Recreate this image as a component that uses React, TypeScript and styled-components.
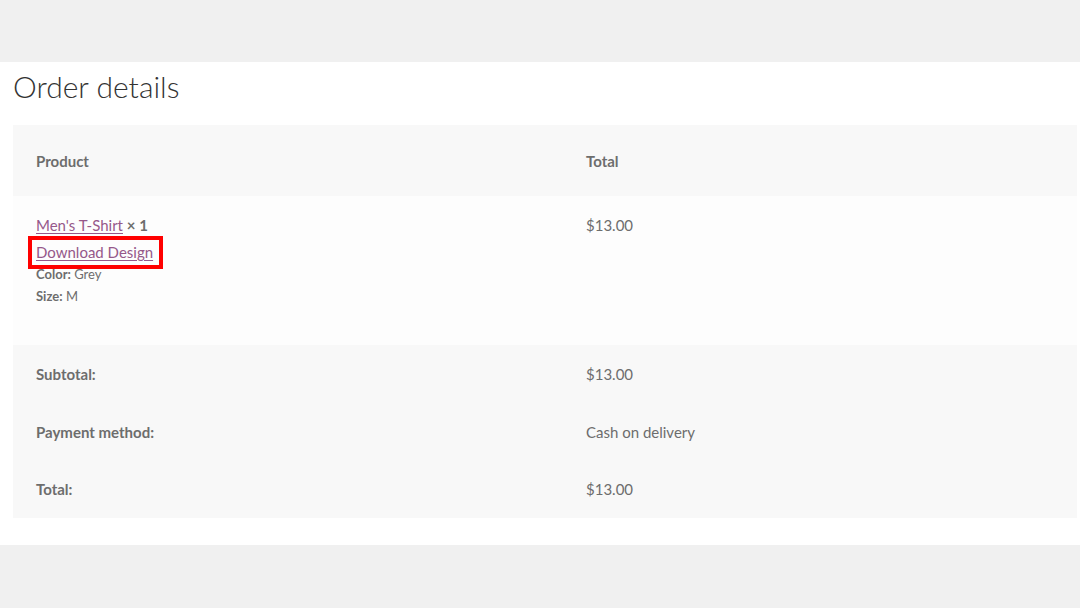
import React from 'react'
import styled, { createGlobalStyle } from 'styled-components'

const GlobalStyle = createGlobalStyle`
  html, body {
    margin: 0;
    padding: 0;
    background: #f0f0f0;
  }
  body {
    font-family: Lato, "Open Sans", sans-serif;
    color: #6d6d6d;
  }
`

const Page = styled.div`
  padding: 62px 0 63px;
`

const Panel = styled.section`
  background: #ffffff;
  padding: 0 3px 27px 13px;
`

const Title = styled.h2`
  margin: 0;
  height: 63px;
  box-sizing: border-box;
  padding-bottom: 16px;
  display: flex;
  align-items: center;
  font-size: 30px;
  font-weight: 300;
  color: #333333;
`

const Table = styled.table`
  width: 100%;
  border-collapse: collapse;
  table-layout: fixed;
  font-size: 15px;
`

const HeadCell = styled.th`
  background: #f8f8f8;
  text-align: left;
  font-weight: 700;
  height: 71px;
  padding: 0 23px;
  box-sizing: border-box;
`

const BodyCell = styled.td`
  background: #fdfdfd;
  vertical-align: top;
  padding: 16px 23px 0;
  height: 149px;
  box-sizing: border-box;
  line-height: 26px;
`

const FootLabel = styled.th`
  background: #f8f8f8;
  text-align: left;
  font-weight: 700;
  padding: 0 23px;
  height: 57.7px;
`

const FootValue = styled.td`
  background: #f8f8f8;
  padding: 0 23px;
`

const ProductLink = styled.a`
  color: #96588a;
  text-decoration: underline;
  text-underline-offset: 2px;
`

const Qty = styled.strong`
  font-weight: 700;
`

const Highlight = styled.span`
  display: inline-block;
  margin-left: -8px;
  margin-top: -2px;
  padding: 0 6px 0 4px;
  border: 4px solid #ff0000;
  line-height: 25px;
`

const Meta = styled.ul`
  list-style: none;
  margin: -6px 0 0;
  padding: 0;
  font-size: 13px;
  line-height: 22px;
`

const MetaLabel = styled.strong`
  font-weight: 700;
`

const footer = [
  { label: 'Subtotal:', value: '$13.00' },
  { label: 'Payment method:', value: 'Cash on delivery' },
  { label: 'Total:', value: '$13.00' },
]

const App: React.FC = () => (
  <Page>
    <GlobalStyle />
    <Panel>
      <Title>Order details</Title>
      <Table>
        <colgroup>
          <col style={{ width: 550 }} />
          <col />
        </colgroup>
        <thead>
          <tr>
            <HeadCell>Product</HeadCell>
            <HeadCell>Total</HeadCell>
          </tr>
        </thead>
        <tbody>
          <tr>
            <BodyCell>
              <div>
                <ProductLink href="#">Men's T-Shirt</ProductLink> <Qty>× 1</Qty>
              </div>
              <Highlight>
                <ProductLink href="#">Download Design</ProductLink>
              </Highlight>
              <Meta>
                <li>
                  <MetaLabel>Color:</MetaLabel> Grey
                </li>
                <li>
                  <MetaLabel>Size:</MetaLabel> M
                </li>
              </Meta>
            </BodyCell>
            <BodyCell>$13.00</BodyCell>
          </tr>
        </tbody>
        <tfoot>
          {footer.map((row) => (
            <tr key={row.label}>
              <FootLabel>{row.label}</FootLabel>
              <FootValue>{row.value}</FootValue>
            </tr>
          ))}
        </tfoot>
      </Table>
    </Panel>
  </Page>
)

export default App
